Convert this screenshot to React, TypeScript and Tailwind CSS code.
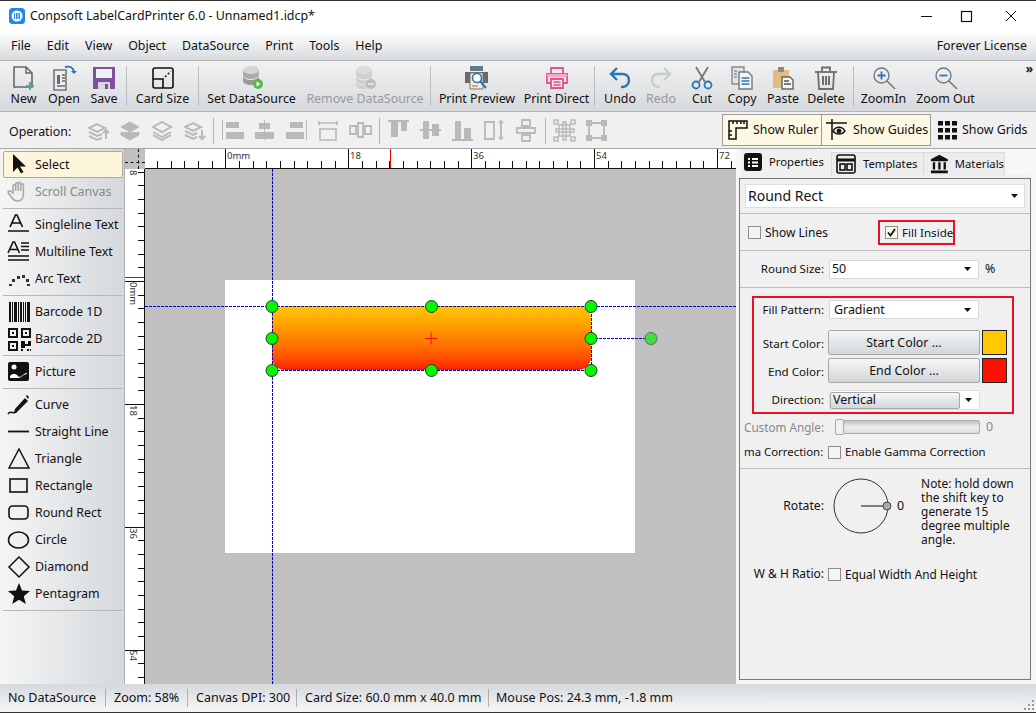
import type { ReactNode } from 'react'

const Caret = () => (
  <svg width="7" height="4" viewBox="0 0 7 4" className="shrink-0"><path d="M0 0h7L3.500 4z" fill="#111" /></svg>
)

// ---- toolbar icons ----
const DbIcon = ({ fill, badge }: { fill: string; badge: string }) => (
  <svg width="26" height="26" viewBox="0 0 26 26">
    <ellipse cx="12" cy="5" rx="8" ry="4" fill={fill} />
    <path d="M4 5v5c0 2 4 4 8 4s8-2 8-4V5c0 2-4 4-8 4S4 7 4 5z" fill="#9a9a9a" opacity="0.8" />
    <path d="M4 11v5c0 2 4 4 8 4s8-2 8-4v-5c0 2-4 4-8 4s-8-2-8-4z" fill="#777" opacity="0.7" />
    <circle cx="19" cy="19" r="5" fill={badge} />
    <path d="M17.500 16.500l4 2.500-4 2.500z" fill="#fff" />
  </svg>
)

const icons: Record<string, ReactNode> = {
  new: (
    <svg width="26" height="26" viewBox="0 0 26 26" fill="none">
      <path d="M3 2h12l6 6v14H3z" stroke="#666" strokeWidth="1.6" />
      <path d="M15 2v6h6" stroke="#666" strokeWidth="1.4" />
      <path d="M19 17v8M15 21h8" stroke="#5aa58a" strokeWidth="2" />
    </svg>
  ),
  open: (
    <svg width="26" height="26" viewBox="0 0 26 26" fill="none">
      <path d="M3 5h12v20H3z" fill="#eee" stroke="#777" strokeWidth="1.6" />
      <path d="M6 10h3v9H6z" fill="#4a6f8f" />
      <path d="M11 10h3M11 13h3M11 16h3M6 21h8" stroke="#666" strokeWidth="1.4" />
      <path d="M14 2c5-1 8 0 9 5" stroke="#2e75b6" strokeWidth="1.8" />
      <path d="M20 6l3 3 3-3z" fill="#2e75b6" />
    </svg>
  ),
  save: (
    <svg width="24" height="24" viewBox="0 0 24 24">
      <path d="M1 1h22v22H1z" fill="#7d51a0" />
      <path d="M4 3h16v9H4z" fill="#f2f2f2" />
      <path d="M6 16h12v7H6z" fill="#d8d8d8" />
      <path d="M13 18h3v5h-3z" fill="#7d51a0" />
    </svg>
  ),
  card: (
    <svg width="24" height="24" viewBox="0 0 24 24" fill="none">
      <rect x="2" y="2" width="20" height="20" rx="2" stroke="#111" strokeWidth="1.600" />
      <path d="M2 13h10v9" stroke="#111" strokeWidth="1.600" />
      <path d="M14 11l6-6" stroke="#111" strokeWidth="1.400" strokeDasharray="2 2" />
    </svg>
  ),
  setds: <DbIcon fill="#d5d5d5" badge="#58b947" />,
  remds: (
    <svg width="26" height="26" viewBox="0 0 26 26">
      <ellipse cx="12" cy="5" rx="8" ry="4" fill="#dcdcdc" />
      <path d="M4 5v15c0 2 4 4 8 4s8-2 8-4V5c0 2-4 4-8 4S4 7 4 5z" fill="#cfcfcf" />
      <path d="M4 11c0 2 4 4 8 4s8-2 8-4M4 16c0 2 4 4 8 4" stroke="#eee" fill="none" />
      <circle cx="19" cy="19" r="5" fill="#bdbdbd" />
      <path d="M16 19h6" stroke="#eee" strokeWidth="1.500" />
    </svg>
  ),
  preview: (
    <svg width="26" height="26" viewBox="0 0 26 26" fill="none">
      <path d="M6 1h13v5H6z" fill="#5c7c8f" />
      <path d="M1 7h23v11H1z" fill="#6a6a6a" />
      <path d="M6 8h13v16H6z" fill="#f1ead8" stroke="#777" />
      <circle cx="13" cy="13" r="4.500" fill="#fff" stroke="#2e75b6" strokeWidth="1.600" />
      <path d="M16 16l6 7" stroke="#2e75b6" strokeWidth="2" />
      <path d="M8 21h6" stroke="#d98c3a" strokeWidth="1.400" />
    </svg>
  ),
  direct: (
    <svg width="24" height="24" viewBox="0 0 24 24" fill="none" stroke="#e8508f" strokeWidth="1.800">
      <path d="M6 8V2h12v6" />
      <path d="M6 17H2V8h20v9h-4" />
      <path d="M6 13h12v9H6z" />
      <path d="M8.500 16h7M8.500 19h7" strokeWidth="1.300" />
      <path d="M2 8h20v3H2z" fill="#f5a9c8" stroke="none" />
    </svg>
  ),
  undo: (
    <svg width="24" height="24" viewBox="0 0 24 24" fill="none">
      <path d="M9 2L3 8l6 6" stroke="#2e75b6" strokeWidth="2.400" />
      <path d="M3 8h11c5 0 7 3 7 6.500S18 21 14 21h-1" stroke="#2e75b6" strokeWidth="2.400" />
    </svg>
  ),
  redo: (
    <svg width="24" height="24" viewBox="0 0 24 24" fill="none">
      <path d="M15 2l6 6-6 6" stroke="#c6cbce" strokeWidth="2.400" />
      <path d="M21 8H10c-5 0-7 3-7 6.500S6 21 10 21h1" stroke="#c6cbce" strokeWidth="2.400" />
    </svg>
  ),
  cut: (
    <svg width="24" height="24" viewBox="0 0 24 24" fill="none">
      <path d="M6 1l9 15M18 1L9 16" stroke="#777" strokeWidth="1.800" />
      <circle cx="6" cy="19" r="3.500" stroke="#2e75b6" strokeWidth="1.800" />
      <circle cx="18" cy="19" r="3.500" stroke="#2e75b6" strokeWidth="1.800" />
    </svg>
  ),
  copy: (
    <svg width="24" height="24" viewBox="0 0 24 24" fill="none">
      <path d="M2 1h12v17H2z" fill="#e4e4e4" stroke="#8a8a8a" strokeWidth="1.400" />
      <path d="M9 6h9l4 4v13H9z" fill="#f6f6f6" stroke="#777" strokeWidth="1.400" />
      <path d="M11.500 12h8M11.500 15h8M11.500 18h8" stroke="#2e75b6" strokeWidth="1.400" />
      <path d="M4 5h3M4 8h3M4 11h3" stroke="#2e75b6" strokeWidth="1.200" />
    </svg>
  ),
  paste: (
    <svg width="24" height="24" viewBox="0 0 24 24" fill="none">
      <path d="M2 4h16v18H2z" fill="#e3bd7c" />
      <path d="M7 1h6v5H7z" fill="#8a8a8a" />
      <path d="M11 11h8l3 3v9H11z" fill="#f4f4f4" stroke="#666" strokeWidth="1.400" />
      <path d="M13 15h5M13 18h7" stroke="#555" strokeWidth="1.300" />
    </svg>
  ),
  del: (
    <svg width="24" height="24" viewBox="0 0 24 24" fill="none" stroke="#6e6e6e" strokeWidth="1.800">
      <path d="M1 6h22" />
      <path d="M8 5V1.500h8V5" />
      <path d="M4 6l1 17h14l1-17" />
      <path d="M9 10v9M12 10v9M15 10v9" strokeWidth="2" />
    </svg>
  ),
  zoomin: (
    <svg width="24" height="24" viewBox="0 0 24 24" fill="none">
      <circle cx="9.500" cy="9.500" r="7.500" stroke="#777" strokeWidth="1.400" />
      <path d="M15 15l8 8" stroke="#777" strokeWidth="1.600" />
      <path d="M9.500 5.500v8M5.500 9.500h8" stroke="#2e75b6" strokeWidth="1.800" />
    </svg>
  ),
  zoomout: (
    <svg width="24" height="24" viewBox="0 0 24 24" fill="none">
      <circle cx="9.500" cy="9.500" r="7.500" stroke="#777" strokeWidth="1.400" />
      <path d="M15 15l8 8" stroke="#777" strokeWidth="1.600" />
      <path d="M5.500 9.500h8" stroke="#2e75b6" strokeWidth="1.800" />
    </svg>
  ),
}

type ToolItem = { id?: string; label?: string; w?: string; off?: boolean }

const toolItems: ToolItem[] = [
  { id: 'new', label: 'New', w: 'w-[41px]' },
  { id: 'open', label: 'Open', w: 'w-[40px]' },
  { id: 'save', label: 'Save', w: 'w-[40px]' },
  {},
  { id: 'card', label: 'Card Size', w: 'w-[67px]' },
  {},
  { id: 'setds', label: 'Set DataSource', w: 'w-[101px]' },
  { id: 'remds', label: 'Remove DataSource', w: 'w-[126px]', off: true },
  {},
  { id: 'preview', label: 'Print Preview', w: 'w-[88px]' },
  { id: 'direct', label: 'Print Direct', w: 'w-[71px]' },
  {},
  { id: 'undo', label: 'Undo', w: 'w-[46px]' },
  { id: 'redo', label: 'Redo', w: 'w-[36px]', off: true },
  { id: 'cut', label: 'Cut', w: 'w-[46px]' },
  { id: 'copy', label: 'Copy', w: 'w-[34px]' },
  { id: 'paste', label: 'Paste', w: 'w-[48px]' },
  { id: 'del', label: 'Delete', w: 'w-[38px] mr-[6px]' },
  {},
  { id: 'zoomin', label: 'ZoomIn', w: 'w-[55px]' },
  { id: 'zoomout', label: 'Zoom Out', w: 'w-[69px]' },
]

function MainToolbar() {
  return (
    <div className="relative flex h-[51px] items-stretch bg-linear-to-b from-[#f2f2f2] to-[#d6dadd] pl-[3px] border-b border-[#b4b4b4]">
      {toolItems.map((t, i) =>
        t.id ? (
          <div key={i} className={`${t.w} flex flex-col items-center pt-[4px]`}>
            <div className="flex h-[26px] items-center justify-center">{icons[t.id]}</div>
            <span className={`whitespace-nowrap leading-[16px] ${t.off ? 'text-[#999]' : 'text-[#111]'}`}>{t.label}</span>
          </div>
        ) : (
          <div key={i} className="mx-[2px] my-[5px] w-px bg-[#b9bdc0]" />
        ),
      )}
      <span className="absolute right-[3px] top-[1px] text-[12px] font-bold leading-[14px] text-[#111]">»</span>
    </div>
  )
}

// ---- operation bar ----
const G = '#b9b9b9'
const opIcons: ReactNode[] = [
  <path key="a" d="M2 9l8-4 8 4-8 4zM2 13l8 4 5-2M2 17l8 4 5-2M19 20v-9M16 14l3-3 3 3" fill="none" stroke={G} strokeWidth="2" />,
  <path key="b" d="M2 8l9-5 9 5-9 5z M2 13l9 5 9-5 M2 13v3l9 5 9-5v-3" fill={G} stroke={G} strokeWidth="1" />,
  <path key="c" d="M2 8l9-5 9 5-9 5zM2 13l9 5 9-5M2 16l9 5 9-5" fill="none" stroke={G} strokeWidth="2" />,
  <path key="d" d="M2 8l8-4 8 4-8 4zM2 12l8 4 4-2M2 16l8 4 4-2M19 11v9M16 17l3 3 3-3" fill="none" stroke={G} strokeWidth="2" />,
  <path key="e" d="M1 1v20h1V1zM5 3h13v6H5zM5 13h18v7H5z" fill={G} />,
  <path key="f" d="M11 1h1v20h-1zM6 4h11v6H6zM2 13h19v7H2z" fill={G} />,
  <path key="g" d="M22 1v20h-1V1zM5 3h13v6H5zM1 13h18v7H1z" fill={G} />,
  <path key="h" d="M2 4h18M2 2v4M20 2v4M3 10h16v11H3z" fill="none" stroke={G} strokeWidth="1.600" />,
  <path key="i" d="M1 7h6v8H1zM9 4h5v14H9zM16 7h6v8h-6zM7 11h2M14 11h2" fill="none" stroke={G} strokeWidth="1.800" />,
  <path key="j" d="M1 1h21v2H1zM4 3h7v15H4zM14 3h6v9h-6z" fill={G} />,
  <path key="k" d="M1 10h21v2H1zM4 2h6v18H4zM13 5h7v12h-7z" fill={G} />,
  <path key="l" d="M1 20h21v2H1zM4 2h6v18H4zM13 9h7v11h-7z" fill={G} />,
  <path key="m" d="M2 3h9v17H2zM18 2v18M16 4l2-2 2 2M16 18l2 2 2-2" fill="none" stroke={G} strokeWidth="1.800" />,
  <path key="n" d="M7 1h8v6H7zM7 16h8v6H7zM2 9h18v5H2zM11 7v2M11 14v2" fill="none" stroke={G} strokeWidth="1.800" />,
  <path key="o" d="M6 6h11v11H6zM10 3h3v18h-3zM3 10h18v3H3zM1 1h4v4H1zM18 1h4v4h-4zM1 18h4v4H1zM18 18h4v4h-4z" fill="none" stroke={G} strokeWidth="1.500" />,
  <path key="p" d="M4 4h15v15H4z" fill="none" stroke={G} strokeWidth="1.800" />,
]

const OpIcon = ({ i }: { i: number }) => (
  <svg width="23" height="23" viewBox="0 0 23 23" className="shrink-0">
    {opIcons[i]}
    {i === 15 && <path d="M1 1h6v6H1zM16 1h6v6h-6zM1 16h6v6H1zM16 16h6v6h-6z" fill={G} />}
  </svg>
)

const OpSep = () => <div className="mx-[-2px] h-[26px] w-px bg-[#b4b4b4]" />

function OperationBar() {
  return (
    <div className="relative flex h-[37px] items-center border-b border-[#a8a8a8] bg-[#f0f0f0] pl-[9px]">
      <span className="mt-[4px] w-[78px] text-[#111]">Operation:</span>
      <div className="mt-[1px] flex items-center gap-[9px]">
        {[0, 1, 2, 3].map(i => <OpIcon key={i} i={i} />)}
        <OpSep />
        {[4, 5, 6, 7, 8].map(i => <OpIcon key={i} i={i} />)}
        <OpSep />
        {[9, 10, 11, 12, 13].map(i => <OpIcon key={i} i={i} />)}
        <OpSep />
        {[14, 15].map(i => <OpIcon key={i} i={i} />)}
      </div>
      <div className="ml-auto mr-[6px] flex items-center">
        <div className="flex h-[32px] w-[100px] items-center gap-[5px] border border-[#9b9b9b] bg-[#fdf8e3] pl-[5px]">
          <svg width="20" height="20" viewBox="0 0 20 20" fill="none" stroke="#111" strokeWidth="1.500">
            <path d="M1 1h18v7H8v11H1z" />
            <path d="M5 1v3M9 1v3M13 1v3M16 1v3M1 11h3M1 15h3" />
          </svg>
          <span className="whitespace-nowrap">Show Ruler</span>
        </div>
        <div className="flex h-[32px] w-[109px] items-center gap-[5px] border border-l-0 border-[#9b9b9b] bg-[#fdf8e3] pl-[4px]">
          <svg width="22" height="22" viewBox="0 0 22 22" fill="none" stroke="#111">
            <path d="M0 4h21M6 0v21" strokeWidth="1.500" />
            <path d="M7 12c3-5 9-5 12 0-3 4-9 4-12 0z" strokeWidth="1.300" />
            <circle cx="13" cy="12" r="2" fill="#111" />
          </svg>
          <span className="whitespace-nowrap">Show Guides</span>
        </div>
        <div className="ml-[3px] flex h-[32px] w-[96px] items-center gap-[5px] pl-[3px]">
          <svg width="20" height="20" viewBox="0 0 20 20" fill="#111">
            {[1, 8, 15].flatMap(y => [1, 8, 15].map(x => <rect key={`${x}-${y}`} x={x} y={y} width="5" height="4.500" />))}
          </svg>
          <span className="whitespace-nowrap">Show Grids</span>
        </div>
      </div>
    </div>
  )
}

// ---- left tools ----
const toolIcon: Record<string, ReactNode> = {
  select: <path d="M6 1v18l4.500-4.500 3.500 6 2.500-1.500-3.500-5.500H19z" fill="#111" />,
  scroll: <path d="M6 13V6a1.300 1.300 0 012.600 0v5-7a1.300 1.300 0 012.600 0v7-7.500a1.300 1.300 0 012.600 0V11 5a1.300 1.300 0 012.600 0v9c0 5-2.500 7-6 7-3 0-4.500-1.500-6-4l-3-4c-1-2 1-3 2.500-1.500z" fill="none" stroke="#aaa" strokeWidth="1.600" />,
  single: <><path d="M3 14L8.500 2l1.500 0L15.500 14M5 10h9" fill="none" stroke="#111" strokeWidth="1.700" /><path d="M1 18h21" stroke="#111" strokeWidth="1.500" /></>,
  multi: <><path d="M1 13L6 2h1.500L12.500 13M3 9.500h8" fill="none" stroke="#111" strokeWidth="1.600" /><path d="M14 3h8M14 6.500h8M14 10h8M1 16h21M1 20h21" stroke="#111" strokeWidth="1.400" /></>,
  arc: <path d="M2 17h3v2H2zM5 12h3v3H5zM10 9h3v3h-3zM15 8h3v3h-3zM19 12h3v3h-3zM20 17h3v2h-3z" fill="#333" />,
  bc1: <path d="M2 2h2v20H2zM5 2h1v20H5zM7 2h3v20H7zM11 2h1v20h-1zM13 2h2v20h-2zM16 2h1v20h-1zM18 2h1v20h-1zM20 2h3v20h-3z" fill="#111" />,
  bc2: <><path fillRule="evenodd" d="M1 1h10v10H1zM3 3v6h6V3zM14 1h10v10H14zM16 3v6h6V3zM1 14h10v10H1zM3 16v6h6v-6z" fill="#111" /><path d="M5 5h2v2H5zM18 5h2v2h-2zM5 18h2v2H5zM14 14h4v3h3v-3h3v5h-6v2h-4zM20 22h2v2h-2zM23 22h1v2h-1zM14 22h2v2h-2z" fill="#111" /></>,
  pic: <><rect x="1" y="2" width="21" height="19" rx="2" fill="#111" /><circle cx="7" cy="7" r="2.500" fill="#fff" /><path d="M3 16c3-3 5-3 8 0s5-3 9-3v1c-4 0-5 4-9 4H3z" fill="#fff" /></>,
  curve: <><path d="M1 21c3-5 6 2 9-3" fill="none" stroke="#111" strokeWidth="1.500" /><path d="M8 16l10-11 3 3-10 10-4 1z" fill="#111" /><path d="M19 3l1-1 2 2-1 2z" fill="#111" /></>,
  line: <path d="M1 11.500h21" stroke="#111" strokeWidth="1.800" />,
  tri: <path d="M12 2L2 21h20z" fill="none" stroke="#111" strokeWidth="1.500" />,
  rect: <rect x="3" y="5" width="17" height="13" fill="none" stroke="#111" strokeWidth="1.600" />,
  round: <rect x="2" y="5" width="19" height="13" rx="3.500" fill="none" stroke="#111" strokeWidth="1.600" />,
  circle: <ellipse cx="11.500" cy="12" rx="10" ry="8" fill="none" stroke="#111" strokeWidth="1.500" />,
  diamond: <path d="M12 2l10 10-10 10L2 12z" fill="none" stroke="#111" strokeWidth="1.500" />,
  star: <path d="M12 1l3 7.600 8 .4-6.200 5.200 2 7.800L12 17.800 5.200 22l2-7.800L1 9l8-.4z" fill="#111" />,
}

const Tool = ({ icon, label, active, off }: { icon: string; label: string; active?: boolean; off?: boolean }) => (
  <div className={`flex h-[27px] items-center border ${active ? 'border-[#a9a9a9] rounded-[2px] bg-[#fdf6dc]' : 'border-transparent'}`}>
    <svg width="24" height="24" viewBox="0 0 24 24" className="ml-[3px] shrink-0">{toolIcon[icon]}</svg>
    <span className={`ml-[4px] whitespace-nowrap ${off ? 'text-[#888]' : 'text-[#111]'}`}>{label}</span>
  </div>
)

const ToolSep = () => (
  <div className="flex h-[6px] items-center"><div className="h-px w-full bg-[#b8b8b8]" /></div>
)

function LeftTools() {
  return (
    <div className="h-full w-[125px] shrink-0 border-r border-[#b0b0b0] bg-linear-to-r from-[#f5f5f5] to-[#d5d9dc] pl-[3px] pr-[1px] pt-[2px]">
      <Tool icon="select" label="Select" active />
      <Tool icon="scroll" label="Scroll Canvas" off />
      <ToolSep />
      <Tool icon="single" label="Singleline Text" />
      <Tool icon="multi" label="Multiline Text" />
      <Tool icon="arc" label="Arc Text" />
      <ToolSep />
      <Tool icon="bc1" label="Barcode 1D" />
      <Tool icon="bc2" label="Barcode 2D" />
      <ToolSep />
      <Tool icon="pic" label="Picture" />
      <ToolSep />
      <Tool icon="curve" label="Curve" />
      <Tool icon="line" label="Straight Line" />
      <Tool icon="tri" label="Triangle" />
      <Tool icon="rect" label="Rectangle" />
      <Tool icon="round" label="Round Rect" />
      <Tool icon="circle" label="Circle" />
      <Tool icon="diamond" label="Diamond" />
      <Tool icon="star" label="Pentagram" />
      <ToolSep />
    </div>
  )
}

// ---- rulers ----
const STEP = 13.66
const TopRuler = () => (
  <svg width="591" height="20" className="block shrink-0">
    <rect width="591" height="20" fill="#fff" />
    {Array.from({ length: 44 }).map((_, i) => {
      const x = Math.round(80.3 - STEP * 5 + STEP * i) + 0.5
      const long = (i - 5) % 9 === 0
      return <line key={i} x1={x} x2={x} y1={long ? 0 : 12} y2={19} stroke="#111" />
    })}
    {[['0mm', 80], ['18', 203], ['36', 326], ['54', 449], ['72', 572]].map(([t, x]) => (
      <text key={t} x={Number(x) + 2} y={10} fontSize="9.500" fill="#333">{t}</text>
    ))}
    <line x1="245.500" x2="245.500" y1="0" y2="19" stroke="#e00" strokeWidth="1" />
    <line x1="0" x2="591" y1="19.500" y2="19.500" stroke="#111" />
  </svg>
)

const LeftRuler = () => (
  <svg width="20" height="515" className="block shrink-0">
    <rect width="20" height="515" fill="#fff" />
    {Array.from({ length: 40 }).map((_, i) => {
      const y = Math.round(-11 - STEP + STEP * i) + 0.5
      const long = (i - 1) % 9 === 0
      return <line key={i} y1={y} y2={y} x1={long ? 0 : 13} x2={20} stroke="#111" />
    })}
    {[['0mm', 113], ['18', 236], ['36', 359], ['54', 481], ['8', 1]].map(([t, y]) => (
      <text key={t} x={5} y={Number(y)} fontSize="9.500" fill="#333" transform={`rotate(90 5 ${y})`}>{t}</text>
    ))}
    <line x1="0" x2="20" y1="108.500" y2="108.500" stroke="#e00" />
    <line x1="19.500" x2="19.500" y1="0" y2="515" stroke="#111" />
  </svg>
)

function CanvasArea() {
  const hx = [127, 286.5, 446]
  const hy = [137, 169, 201]
  return (
    <div className="flex min-w-0 flex-1 flex-col">
      <div className="flex">
        <div className="relative h-[20px] w-[20px] shrink-0 bg-[#c0c0c0]">
          <div className="absolute left-[13px] top-0 h-full border-l border-dashed border-[#111]" />
          <div className="absolute left-0 top-[13px] w-full border-t border-dashed border-[#111]" />
        </div>
        <TopRuler />
      </div>
      <div className="flex flex-1">
        <LeftRuler />
        <div className="relative flex-1 overflow-hidden bg-[#c0c0c0]">
          <div className="absolute left-[80px] top-[111px] h-[273px] w-[410px] bg-white" />
          <div className="absolute left-[127px] top-[137px] h-[64px] w-[319px] rounded-[13px] bg-linear-to-b from-[#ffc800] to-[#ff1000]" />
          <svg width="591" height="515" className="absolute left-0 top-0">
            <path d="M127.500 0V515M0 137.500H591" stroke="#0000f0" strokeDasharray="3 1" fill="none" />
            <path d="M446.500 137V201.500H127.500M446 169.500H506" stroke="#0000f0" strokeDasharray="3 1" fill="none" />
            <path d="M280 169.500h12M286 163.500v12" stroke="#f01010" fill="none" />
            {hy.flatMap(y => hx.map(x => (
              x === 286.5 && y === 169 ? null : <circle key={`${x}-${y}`} cx={x} cy={y + 0.5} r="6" fill="#00f800" stroke="#333" />
            )))}
            <circle cx="506" cy="169.500" r="6" fill="#44dd44" stroke="#666" />
          </svg>
        </div>
      </div>
    </div>
  )
}

// ---- right panel ----
const Check = ({ on }: { on?: boolean }) => (
  <div className={`flex h-[13px] w-[13px] shrink-0 items-center justify-center border border-[#8e8e8e] ${on ? 'bg-[#fdf8e3]' : 'bg-[#f4f4f4]'}`}>
    {on && (
      <svg width="9" height="9" viewBox="0 0 9 9" fill="none"><path d="M1 4.500l2.500 3L8 1" stroke="#111" strokeWidth="1.800" /></svg>
    )}
  </div>
)

const Select = ({ text, className }: { text: string; className: string }) => (
  <div className={`flex items-center justify-between border border-[#d8d8d8] bg-white pr-[7px] ${className}`}>
    <span>{text}</span>
    <Caret />
  </div>
)

const Label = ({ children, className }: { children: ReactNode; className: string }) => (
  <span className={`shrink-0 whitespace-nowrap text-right text-[11.600px] ${className}`}>{children}</span>
)

const ColorRow = ({ label, swatch }: { label: string; swatch: string }) => (
  <div className="flex h-[25px] items-center">
    <Label className="mt-[3px] w-[70px]">{label}</Label>
    <div className="ml-[4px] flex h-[25px] w-[152px] items-center justify-center rounded-[2px] border border-[#a8a8a8] bg-linear-to-b from-[#f5f5f5] to-[#d3d7da]">
      {label.replace(':', '')} ...
    </div>
    <div className={`ml-[2px] h-[25px] w-[25px] border border-[#222] ${swatch}`} />
  </div>
)

function RightPanel() {
  return (
    <div className="flex h-full w-[300px] shrink-0 flex-col bg-[#f7f7f7] pl-[3px] pr-[5px]">
      <div className="flex h-[26px] items-end pl-[2px] text-[11.300px]">
        <div className="flex h-[26px] w-[90px] items-center gap-[7px] bg-[#f0f0f0] pl-[3px]">
          <svg width="18" height="18" viewBox="0 0 18 18"><rect width="18" height="18" rx="3" fill="#111" /><path d="M4 5h2v2H4zM8 5h6v2H8zM4 8.500h2v2H4zM8 8.500h6v2H8zM4 12h2v2H4zM8 12h6v2H8z" fill="#fff" /></svg>
          <span>Properties</span>
        </div>
        <div className="flex h-[23px] w-[93px] items-center gap-[7px] border-x border-t border-[#dadada] bg-[#ececec] pl-[4px]">
          <svg width="20" height="20" viewBox="0 0 20 20" fill="none" stroke="#111" strokeWidth="1.600"><rect x="1" y="1" width="18" height="18" rx="2" /><path d="M1 6h18" strokeWidth="3" /><rect x="4" y="10" width="5" height="6" /><rect x="11" y="10" width="5" height="6" /></svg>
          <span>Templates</span>
        </div>
        <div className="flex h-[23px] w-[81px] items-center gap-[6px] border-r border-t border-[#dadada] bg-[#ececec] pl-[6px]">
          <svg width="20" height="20" viewBox="0 0 20 20" fill="#111"><path d="M10 0l9 5v2H1V5zM3 8h2.500v8H3zM8.800 8h2.500v8H8.800zM14.500 8H17v8h-2.500zM1 17h18v3H1z" /></svg>
          <span>Materials</span>
        </div>
      </div>
      <div className="h-[3px] bg-[#f0f0f0]" />
      <div className="flex h-[502px] flex-col border border-[#777] bg-[#f0f0f0]">
        <div className="h-[35px] shrink-0 border-b border-[#bcbcbc] px-[5px] pt-[5px]">
          <div className="flex h-[24px] items-center justify-between border border-[#dedede] bg-white pl-[2px] pr-[6px] text-[14px]">
            <span>Round Rect</span><Caret />
          </div>
        </div>
        <div className="flex h-[37px] shrink-0 items-center border-b border-[#bcbcbc] pl-[8px]">
          <Check />
          <span className="ml-[4px] mt-[1px] w-[113px] text-[12px]">Show Lines</span>
          <div className="flex h-[25px] w-[77px] items-center border-2 border-[#e81123] pl-[5px]">
            <Check on />
            <span className="ml-[4px] mt-[1px] whitespace-nowrap text-[11.600px]">Fill Inside</span>
          </div>
        </div>
        <div className="flex h-[37px] shrink-0 items-center border-b border-[#bcbcbc]">
          <Label className="w-[84px]">Round Size:</Label>
          <Select text="50" className="ml-[5px] h-[19px] w-[150px] pl-[2px]" />
          <span className="ml-[6px]">%</span>
        </div>
        <div className="h-[181px] shrink-0 border-b border-[#bcbcbc] pt-[8px]">
          <div className="ml-[12px] h-[118px] w-[262px] border-2 border-[#e81123]">
            <div className="mt-[2px] flex h-[19px] items-center">
              <Label className="w-[70px]">Fill Pattern:</Label>
              <Select text="Gradient" className="ml-[5px] h-[19px] w-[150px] pl-[4px]" />
            </div>
            <div className="mt-[11px]"><ColorRow label="Start Color:" swatch="bg-[#ffc800]" /></div>
            <div className="mt-[3px]"><ColorRow label="End Color:" swatch="bg-[#ff1000]" /></div>
            <div className="mt-[7px] flex h-[20px] items-center">
              <Label className="w-[70px]">Direction:</Label>
              <div className="ml-[5px] flex h-[20px] w-[151px] items-center border border-[#dedede] bg-white pr-[7px]">
                <div className="flex h-[17px] w-[130px] items-center rounded-[2px] border border-[#a8a8a8] bg-linear-to-b from-[#f6f6f6] to-[#d3d7da] pl-[2px]">Vertical</div>
                <div className="ml-auto"><Caret /></div>
              </div>
            </div>
          </div>
          <div className="mt-[4px] flex h-[18px] items-center text-[#888]">
            <span className="ml-[4px] w-[91px] whitespace-nowrap text-[11.700px]">Custom Angle:</span>
            <div className="h-[16px] w-[9px] rounded-[2px] border border-[#aaa] bg-[#eef0f2]" />
            <div className="h-[14px] w-[136px] rounded-r-[3px] border border-l-0 border-[#aaa] bg-linear-to-b from-[#c0c0c0] via-[#eeeeee] to-[#dddddd]" />
            <span className="ml-[6px]">0</span>
          </div>
          <div className="mt-[7px] flex h-[18px] items-center text-[11.400px]">
            <span className="ml-[4px] w-[84px] whitespace-nowrap">ma Correction:</span>
            <Check />
            <span className="ml-[4px]">Enable Gamma Correction</span>
          </div>
        </div>
        <div className="flex pt-[7px]">
          <div className="flex h-[60px] items-center">
            <Label className="w-[84px] text-[12.200px]">Rotate:</Label>
            <svg width="72" height="60" viewBox="0 0 72 60" className="ml-[9px] shrink-0" fill="none">
              <circle cx="28" cy="30" r="27" stroke="#333" />
              <path d="M28 30h26" stroke="#111" />
              <circle cx="54" cy="30" r="4" fill="#aaa" stroke="#444" />
            </svg>
            <span className="ml-[-8px]">0</span>
          </div>
          <p className="ml-[17px] w-[100px] text-[11.900px] leading-[14px]">Note: hold down the shift key to generate 15 degree multiple angle.</p>
        </div>
        <div className="mt-[19px] flex h-[18px] items-center">
          <Label className="w-[84px] text-[12px]">W &amp; H Ratio:</Label>
          <div className="ml-[4px]"><Check /></div>
          <span className="ml-[4px] whitespace-nowrap text-[11.800px]">Equal Width And Height</span>
        </div>
      </div>
    </div>
  )
}

export default function App() {
  return (
    <div className="relative flex h-[713px] w-[1036px] flex-col overflow-hidden border-t border-[#333] bg-white font-['Noto_Sans',sans-serif] text-[12.400px] leading-[16px] text-[#111]">
      {/* title bar */}
      <div className="flex h-[30px] shrink-0 items-center bg-white pl-[9px]">
        <svg width="16" height="16" viewBox="0 0 16 16">
          <rect width="16" height="16" rx="3.500" fill="#1e88f0" />
          <circle cx="8" cy="8" r="5.500" fill="#fff" />
          <path d="M5 5h1v6H5zM7 5h1.500v6H7zM9.500 5h1.500v6H9.500z" fill="#1e88f0" />
        </svg>
        <span className="ml-[5px]">Conpsoft LabelCardPrinter 6.0 - Unnamed1.idcp*</span>
        <svg width="110" height="14" viewBox="0 0 110 14" className="ml-auto mr-[5px]" fill="none" stroke="#111">
          <path d="M0 7.500h11" />
          <rect x="40.500" y="2.500" width="10" height="10" strokeWidth="1.200" />
          <path d="M85 2l10 10M95 2L85 12" />
        </svg>
      </div>
      {/* menu */}
      <div className="flex h-[30px] shrink-0 items-center gap-[16px] border-b border-[#b4b4b4] bg-linear-to-b from-white to-[#d8dcdf] pl-[11px] pr-[9px]">
        <span>File</span><span>Edit</span><span>View</span><span>Object</span><span>DataSource</span><span>Print</span><span>Tools</span><span>Help</span>
        <span className="ml-auto">Forever License</span>
      </div>
      <MainToolbar />
      <OperationBar />
      <div className="flex min-h-0 flex-1">
        <LeftTools />
        <CanvasArea />
        <RightPanel />
      </div>
      {/* status bar */}
      <div className="relative flex h-[29px] shrink-0 items-center border-b border-[#333] bg-linear-to-b from-[#d5d9dc] to-[#f7f7f7] pl-[8px] text-[12.500px]">
        <span className="w-[97px]">No DataSource</span>
        <div className="h-[18px] w-px bg-[#b0b0b0]" />
        <span className="ml-[8px] w-[73px]">Zoom: 58%</span>
        <div className="h-[18px] w-px bg-[#b0b0b0]" />
        <span className="ml-[8px] w-[100px]">Canvas DPI: 300</span>
        <div className="h-[18px] w-px bg-[#b0b0b0]" />
        <span className="ml-[8px] w-[183px]">Card Size: 60.0 mm x 40.0 mm</span>
        <div className="h-[18px] w-px bg-[#b0b0b0]" />
        <span className="ml-[7px]">Mouse Pos: 24.3 mm, -1.8 mm</span>
        <svg width="12" height="12" viewBox="0 0 12 12" className="absolute bottom-[1px] right-[1px]" fill="#999">
          <path d="M9 1h2v2H9zM5 5h2v2H5zM9 5h2v2H9zM1 9h2v2H1zM5 9h2v2H5zM9 9h2v2H9z" />
        </svg>
      </div>
    </div>
  )
}
